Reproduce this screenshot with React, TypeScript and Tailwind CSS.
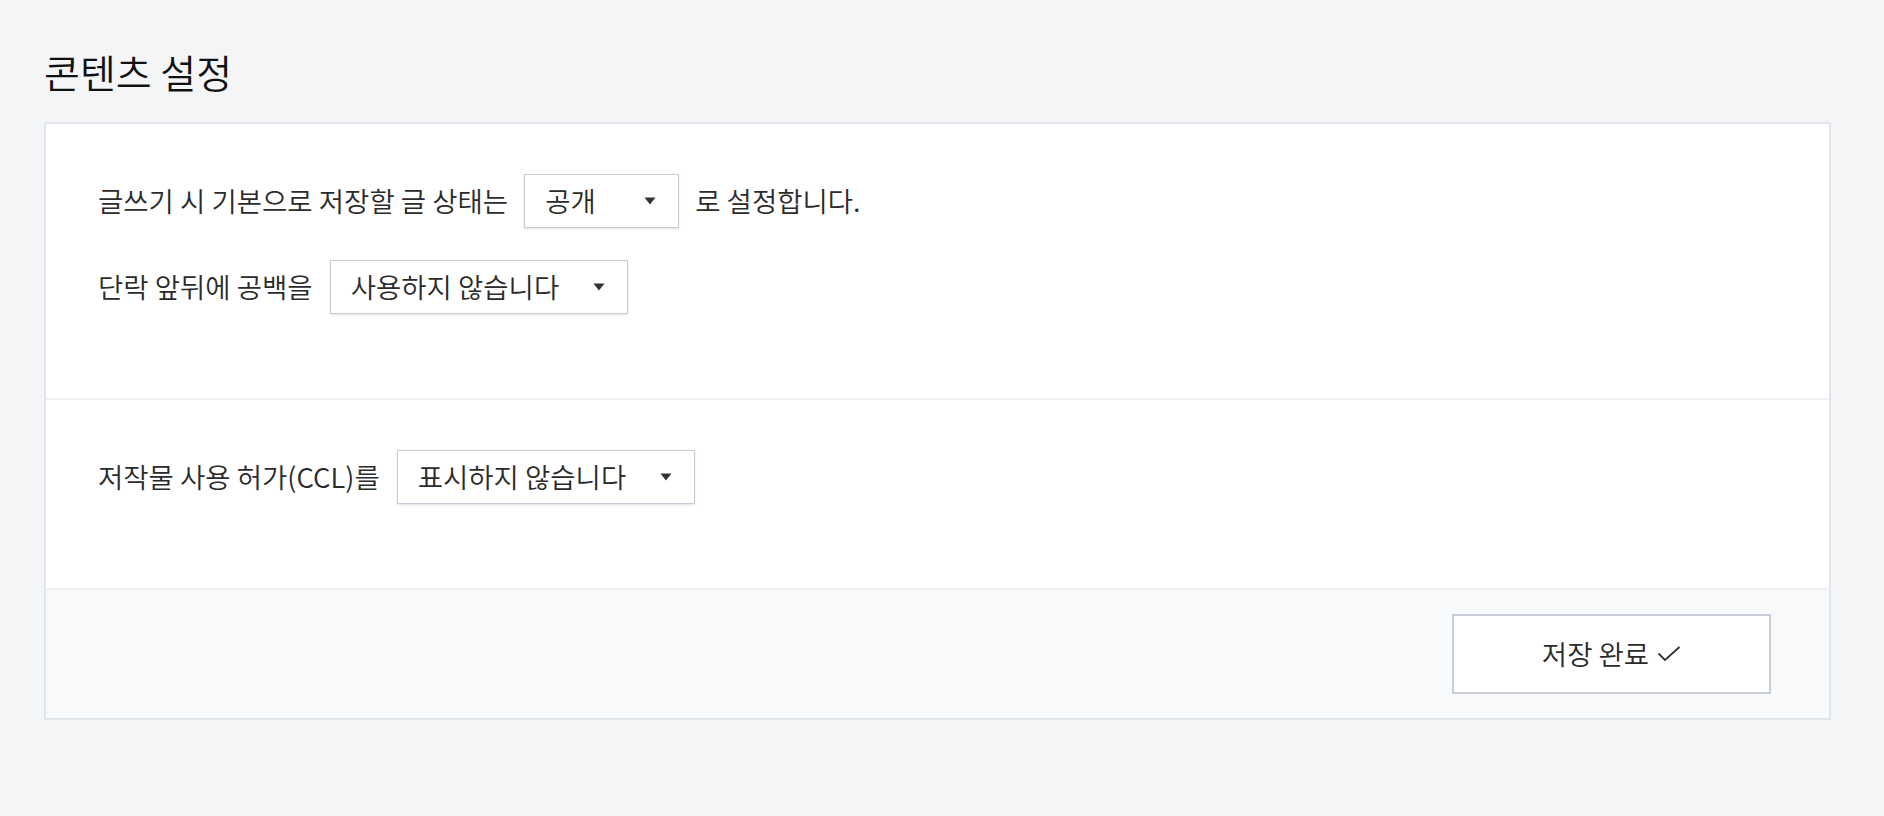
const font = { fontFamily: '"Noto Sans CJK KR", "Noto Sans", sans-serif' };

function Caret() {
  return (
    <svg width="12" height="8" viewBox="0 0 12 8" className="shrink-0">
      <path d="M0.5 0.5 L11.5 0.5 L6 7.5 Z" fill="#333" />
    </svg>
  );
}

function Select({ value, width }: { value: string; width: string }) {
  return (
    <div
      className={`flex h-[54px] ${width} items-center justify-between border border-[#c6ccd7] bg-white pl-[20px] pr-[22px] shadow-[0_1px_2px_rgba(0,0,0,0.12)]`}
    >
      <span>{value}</span>
      <Caret />
    </div>
  );
}

export default function App() {
  return (
    <div className="min-h-[816px] w-full bg-[#f4f5f7] pl-[44px] pr-[53px] pt-[44px]" style={font}>
      <h1 className="mb-[24px] text-[39px] font-[350] leading-[54px] text-[#111]">콘텐츠 설정</h1>

      <div className="border-2 border-[#e2e5ec] bg-white text-[27.5px] font-[350] text-[#2b2b2b]">
        {/* 글 상태 / 공백 */}
        <div className="px-[52px] pt-[50px] pb-[52px]">
          <div className="mb-[32px] flex items-center gap-[16px]">
            <span>글쓰기 시 기본으로 저장할 글 상태는</span>
            <Select value="공개" width="w-[155px]" />
            <span>로 설정합니다.</span>
          </div>
          <div className="mb-[32px] flex items-center gap-[17px]">
            <span>단락 앞뒤에 공백을</span>
            <Select value="사용하지 않습니다" width="w-[298px]" />
          </div>
        </div>

        <div className="h-[2px] bg-[#eef0f4]" />

        {/* CCL */}
        <div className="px-[52px] pt-[50px] pb-[52px]">
          <div className="mb-[32px] flex items-center gap-[17px]">
            <span>저작물 사용 허가(CCL)를</span>
            <Select value="표시하지 않습니다" width="w-[298px]" />
          </div>
        </div>

        {/* footer */}
        <div className="flex justify-end border-t-2 border-[#eef0f4] bg-[#f8f9fb] py-[24px] pr-[58px]">
          <button className="flex h-[80px] w-[319px] items-center justify-center gap-[8px] border-2 border-[#c8cdd7] bg-white text-[27.5px] font-[350] text-[#2b2b2b]">
            저장 완료
            <svg width="24" height="16" viewBox="0 0 24 16" fill="none">
              <path d="M1.5 7.5 L8 14 L22.5 1" stroke="#333" strokeWidth="1.8" />
            </svg>
          </button>
        </div>
      </div>
    </div>
  );
}
